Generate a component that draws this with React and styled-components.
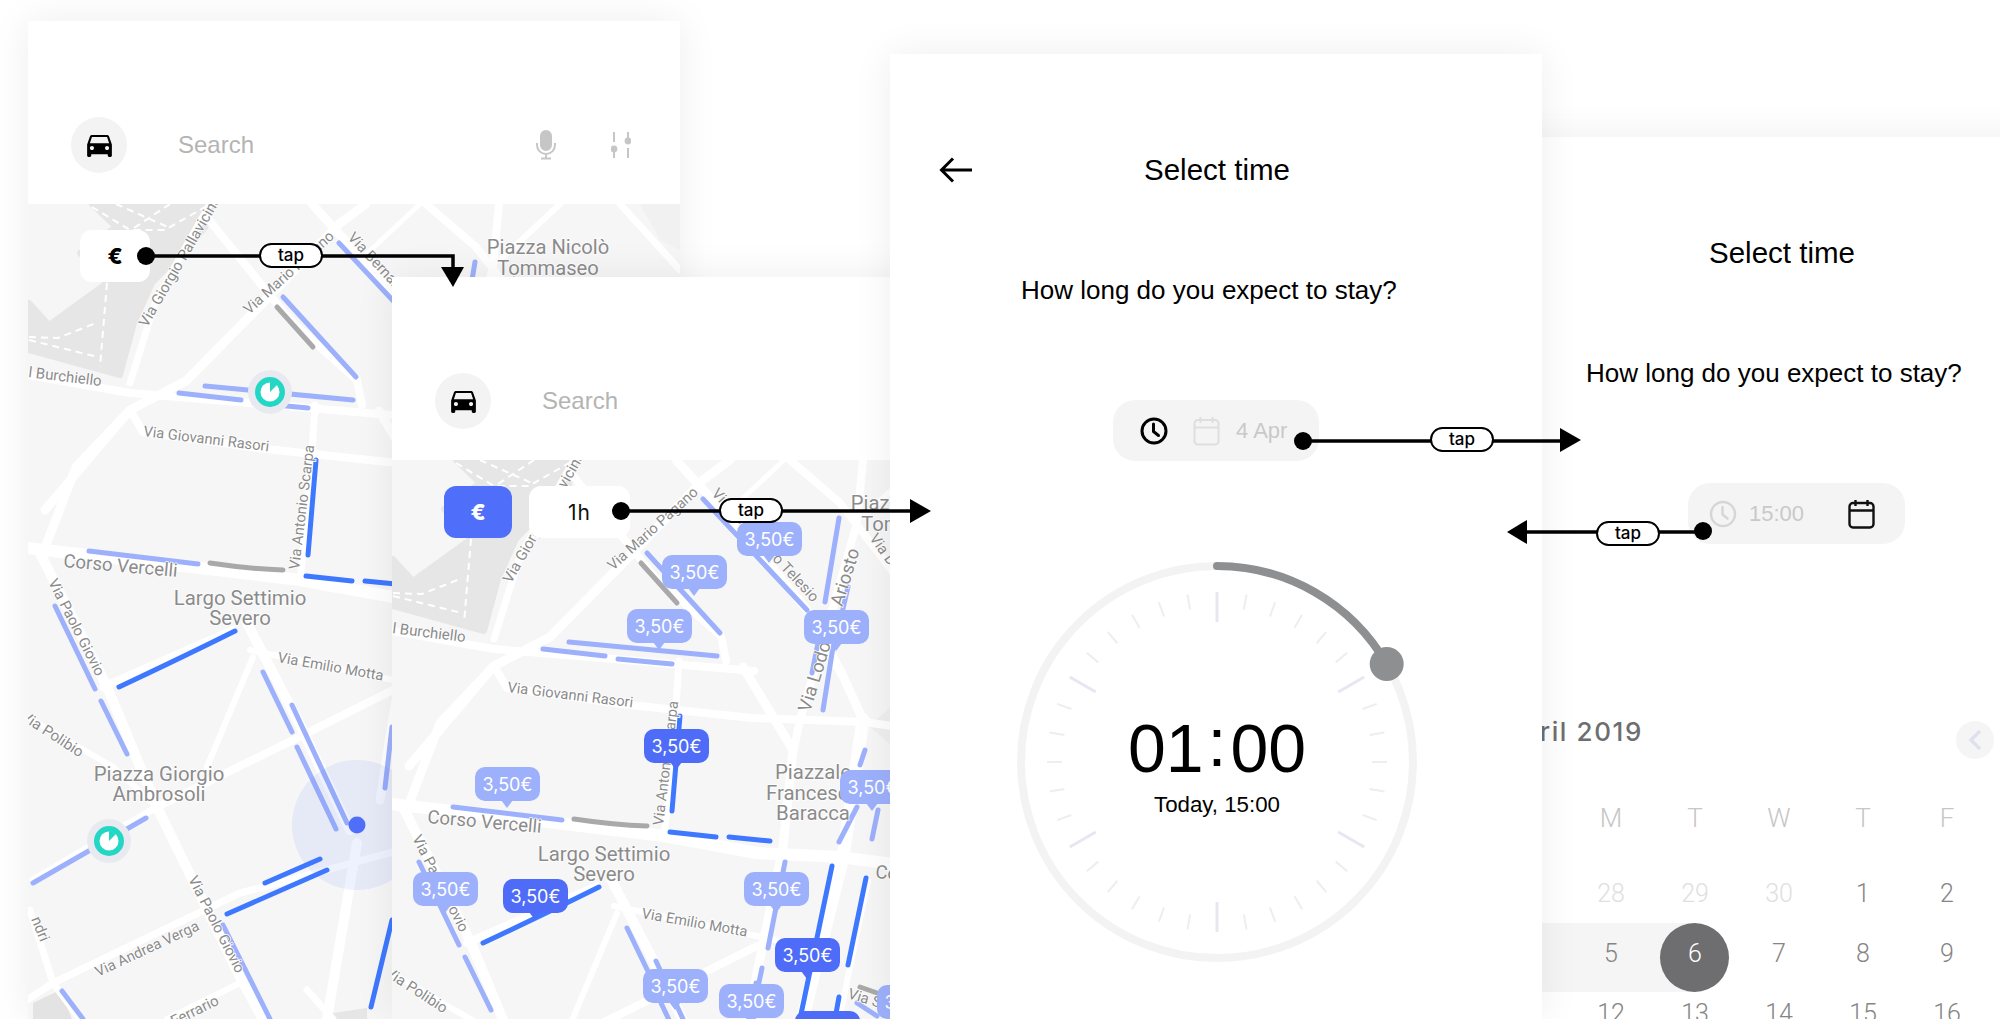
import React from "react";
import styled, { createGlobalStyle } from "styled-components";

const SANS = `"Liberation Sans", Arial, sans-serif`;

// all map drawing is in page coordinates of the first screen
const ROADS = [
  ["M27 548L200 568L300 580L393 597L476 601L680 628", 12],
  ["M40 553L107 687L157 807L240 977L263 1019", 10],
  ["M43 553L76 467L130 410L186 381L259 307L339 224L366 204", 9],
  ["M45 510L130 410", 9],
  ["M130 383L156 300L210 204", 7],
  ["M205 215L290 320L357 380L362 405", 8],
  ["M312 204L393 293L443 354L479 420L499 464", 9],
  ["M28 375L130 393L250 403L390 415", 8],
  ["M130 410L143 432L266 449L388 462L499 466L680 490", 8],
  ["M315 405L308 510L300 580", 7],
  ["M247 623L300 725L350 830", 10],
  ["M357 843L327 1019", 10],
  ["M103 687L233 630", 8],
  ["M207 767L253 657", 6],
  ["M157 807L293 740L393 690", 8],
  ["M27 717L113 767L157 807", 6],
  ["M33 880L157 807", 7],
  ["M27 1000L53 983L240 893L327 870L400 850", 7],
  ["M167 1019L240 983", 6],
  ["M30 910L53 983L80 1019", 7],
  ["M307 990L333 1019", 7],
  ["M250 650L393 680L440 690", 6],
  ["M379 411L429 494L419 591L393 717L380 800", 9],
  ["M499 464L479 601L439 761L425 840", 13],
  ["M426 204L476 247L540 330", 8],
  ["M499 204L493 267L469 351L436 464L429 497", 8],
  ["M560 204L500 260", 6],
  ["M420 204L360 260", 5],
  ["M620 204L680 270", 7],
  ["M504 625L480 740L460 840", 6],
];

const LIGHT = [
  [339, 243, 443, 354], [283, 297, 356, 377], [179, 393, 241, 400], [205, 386, 353, 400],
  [254, 403, 308, 408], [475, 262, 461, 346], [484, 331, 478, 357], [459, 454, 469, 391],
  [448, 417, 454, 387], [89, 551, 198, 564], [55, 606, 95, 689], [101, 701, 127, 754],
  [263, 672, 292, 732], [292, 705, 347, 823], [297, 747, 336, 829], [33, 883, 146, 818],
  [223, 925, 270, 1019], [62, 991, 83, 1019], [392, 727, 385, 788], [421, 606, 404, 692],
  [398, 712, 394, 731], [501, 494, 496, 509], [514, 554, 508, 583], [493, 551, 475, 586],
  [493, 747, 513, 760],
];

const DARK = [
  [316, 460, 308, 555], [306, 576, 352, 581], [365, 581, 406, 585], [265, 883, 320, 859],
  [227, 914, 327, 870], [392, 920, 371, 1007], [468, 610, 436, 763], [502, 622, 484, 709],
  [475, 741, 471, 763],
];

const GREY = [[277, 307, 313, 347], [496, 731, 513, 737]];

const LABELS = [
  { t: "Piazza Nicolò", x: 548, y: 254, s: 20.2, m: 1 },
  { t: "Tommaseo", x: 548, y: 275, s: 20.2, m: 1 },
  { t: "Via Giorgio Pallavicino", x: 147, y: 328, a: -60, s: 15 },
  { t: "Via Mario Pagano", x: 249, y: 315, a: -42, s: 14.7 },
  { t: "Via Bernardino Telesio", x: 347, y: 238, a: 47, s: 15 },
  { t: "Via Lodovico Ariosto", x: 446, y: 457, a: -73, s: 18.5 },
  { t: "Via Antonio Scarpa", x: 299, y: 570, a: -83, s: 14.8 },
  { t: "l Burchiello", x: 101, y: 386, a: 7, s: 15, e: 1 },
  { t: "Via Giovanni Rasori", x: 143, y: 436, a: 7, s: 14.7 },
  { t: "Corso Vercelli", x: 63, y: 567, a: 5, s: 18.6 },
  { t: "Via Paolo Giovio", x: 48, y: 582, a: 63, s: 14.7 },
  { t: "Largo Settimio", x: 240, y: 605, s: 20.4, m: 1 },
  { t: "Severo", x: 240, y: 625, s: 20.4, m: 1 },
  { t: "Via Emilio Motta", x: 277, y: 662, a: 10, s: 14.7 },
  { t: "Via Polibio", x: 20, y: 719, a: 33, s: 15 },
  { t: "Piazza Giorgio", x: 159, y: 781, s: 20.4, m: 1 },
  { t: "Ambrosoli", x: 159, y: 801, s: 20.4, m: 1 },
  { t: "Via Andrea Verga", x: 98, y: 977, a: -25, s: 14.7 },
  { t: "Via Paolo Giovio", x: 188, y: 879, a: 63, s: 14.7 },
  { t: "Via Ferrario", x: 220, y: 1004, a: -26, s: 15, e: 1 },
  { t: "ndri", x: 31, y: 919, a: 68, s: 15 },
  { t: "Piazzale", x: 449, y: 523, s: 20.4, m: 1 },
  { t: "Francesco", x: 449, y: 544, s: 20.4, m: 1 },
  { t: "Baracca", x: 449, y: 564, s: 20.4, m: 1 },
  { t: "Corso", x: 511, y: 622, a: 5, s: 18.6 },
  { t: "Via Solari", x: 483, y: 742, a: 17, s: 15 },
  { t: "Via Dante", x: 505, y: 282, a: 55, s: 15 },
];

const PARK_DASHES = [
  "M92 207L130 230L165 230L205 207",
  "M116 204L170 228M170 204L134 228",
  "M107 283L100 367",
  "M29 337L58 338L96 323",
  "M29 340L98 357",
];

const BADGES = [
  [769, 539], [694, 572], [659, 626], [836, 627], [676, 746, 1], [507, 784], [872, 787],
  [445, 889], [535, 896, 1], [776, 889], [807, 955, 1], [675, 986], [751, 1001], [827, 1028, 1],
  [909, 1002],
];

const Line = ({ d, color, width = 5 }) => (
  <path d={d} fill="none" stroke={color} strokeWidth={width} strokeLinecap="round" strokeLinejoin="round" />
);

const Segments = ({ list, color }) =>
  list.map(([x1, y1, x2, y2]) => (
    <Line key={`${x1}-${y1}`} d={`M${x1} ${y1}L${x2} ${y2}`} color={color} />
  ));

const TealMarker = ({ x, y }) => (
  <g>
    <circle cx={x} cy={y} r="22" fill="#e9eaf0" />
    <circle cx={x} cy={y} r="15" fill="#24d7c4" />
    <circle cx={x} cy={y} r="9.5" fill="#fff" />
    <path d={`M${x} ${y}V${y - 10}A10 10 0 0 1 ${x + 7} ${y - 7}Z`} fill="#24d7c4" />
  </g>
);

const MapDrawing = ({ location }) => (
  <MapSvg viewBox="28 204 652 815">
    <rect x="28" y="204" width="652" height="815" fill="#f6f6f7" />
    <path
      d="M92 204L212 204L205 228L152 283L134 323L120 375L29 350L29 303L49 325L107 283L80 253L116 227Z"
      fill="#e6e6e7"
      stroke="#e6e6e7"
      strokeWidth="6"
      strokeLinejoin="round"
    />
    <path d="M33 1003L60 990L72 1019L33 1019Z" fill="#e3e3e4" />
    <path d="M333 1013L367 1008L367 1019L333 1019Z" fill="#e6e6e7" />
    <path d="M640 204L680 204L680 250L660 240Z" fill="#f1f1f2" />
    <path d="M505 470L540 440L540 500Z" fill="#efeff0" />
    {PARK_DASHES.map((d) => (
      <path key={d} d={d} fill="none" stroke="#fff" strokeWidth="2" strokeDasharray="7 5" />
    ))}
    {ROADS.map(([d, w]) => (
      <Line key={d} d={d} color="#fff" width={w} />
    ))}
    <Segments list={LIGHT} color="#9db0fb" />
    <Segments list={DARK} color="#3e78ff" />
    <Segments list={GREY} color="#a9a9a9" />
    <Line d="M119 687Q187 655 235 631" color="#3e78ff" />
    <Line d="M210 563Q250 569 283 570" color="#a9a9a9" />
    {LABELS.map((l) => (
      <MapLabel
        key={l.t + l.x}
        x={l.x}
        y={l.y}
        fontSize={l.s}
        textAnchor={l.m ? "middle" : l.e ? "end" : "start"}
        transform={l.a ? `rotate(${l.a} ${l.x} ${l.y})` : undefined}
      >
        {l.t}
      </MapLabel>
    ))}
    {location && (
      <g>
        <circle cx="357" cy="825" r="65" fill="#5a76f7" opacity="0.1" />
        <circle cx="357" cy="825" r="8.5" fill="#4f6ffa" />
        <TealMarker x={270} y={392} />
        <TealMarker x={109} y={841} />
      </g>
    )}
  </MapSvg>
);

const CarIcon = () => (
  <svg width="33" height="33" viewBox="0 0 24 24" fill="#000">
    <path d="M18.92 6.01C18.72 5.42 18.16 5 17.5 5h-11c-.66 0-1.21.42-1.42 1.01L3 12v8c0 .55.45 1 1 1h1c.55 0 1-.45 1-1v-1h12v1c0 .55.45 1 1 1h1c.55 0 1-.45 1-1v-8l-2.08-5.99zM6.5 16c-.83 0-1.5-.67-1.5-1.5S5.67 13 6.5 13s1.5.67 1.5 1.5S7.33 16 6.5 16zm11 0c-.83 0-1.5-.67-1.5-1.5s.67-1.5 1.5-1.5 1.5.67 1.5 1.5-.67 1.5-1.5 1.5zM5 11l1.5-4.5h11L19 11H5z" />
  </svg>
);

const MicIcon = () => (
  <svg width="22" height="30" viewBox="0 0 22 30" fill="none" stroke="#c6c6c6" strokeWidth="2">
    <rect x="6" y="1" width="10" height="19" rx="5" fill="#c6c6c6" />
    <path d="M2 13v2a9 9 0 0 0 18 0v-2M11 24v4M6 28.5h10" />
  </svg>
);

const SlidersIcon = () => (
  <svg width="20" height="28" viewBox="0 0 20 28" fill="#c6c6c6" stroke="#c6c6c6" strokeWidth="2">
    <path d="M3 1v10M3 21v6M17 1v6M17 17v10" />
    <circle cx="3" cy="18" r="2.4" />
    <circle cx="17" cy="10" r="2.4" />
  </svg>
);

const BackArrow = () => (
  <svg width="34" height="26" viewBox="0 0 34 26" fill="none" stroke="#000" strokeWidth="3">
    <path d="M33 13H3M14 1.5L2.5 13L14 24.5" />
  </svg>
);

const ClockIcon = ({ color, width }) => (
  <svg width="28" height="28" viewBox="0 0 28 28" fill="none" stroke={color} strokeWidth={width}>
    <circle cx="14" cy="14" r="12" />
    <path d="M13.5 7v7.5l5 4" strokeLinecap="round" />
  </svg>
);

const CalendarIcon = ({ color, width }) => (
  <svg width="27" height="30" viewBox="0 0 27 30" fill="none" stroke={color} strokeWidth={width}>
    <rect x="1.5" y="4" width="24" height="24.5" rx="3.5" />
    <path d="M1.5 11.5h24M7.5 1v6M19.5 1v6" />
  </svg>
);

const TICK_ANGLES = Array.from({ length: 36 }, (_, i) => i * 10);

const DialDrawing = () => (
  <DialSvg viewBox="-200 -200 400 400">
    <circle r="196" fill="none" stroke="#f3f3f4" strokeWidth="8" />
    {TICK_ANGLES.map((a) => {
      const major = a % 60 === 0;
      return (
        <line
          key={a}
          y1={major ? -140 : -155}
          y2="-170"
          stroke={major ? "#e6e7f1" : "#ededf2"}
          strokeWidth={major ? 3 : 2}
          transform={`rotate(${a})`}
        />
      );
    })}
    <path d="M0 -196A196 196 0 0 1 169.7 -98" fill="none" stroke="#8e8f91" strokeWidth="8" strokeLinecap="round" />
    <circle cx="169.7" cy="-98" r="17" fill="#8e8f91" />
  </DialSvg>
);

const SearchHeader = () => (
  <Header>
    <CarBadge>
      <CarIcon />
    </CarBadge>
    <SearchText>Search</SearchText>
    <HeaderTools>
      <MicIcon />
      <SlidersIcon />
    </HeaderTools>
  </Header>
);

const TimeIntro = () => (
  <>
    <TitleRow>
      <BackArrow />
      <Title>Select time</Title>
    </TitleRow>
    <Question>How long do you expect to stay?</Question>
  </>
);

const WEEK = ["M", "T", "W", "T", "F", "S", "S"];
const DAYS = [
  [28, "muted"], [29, "muted"], [30, "muted"], [1], [2], [3], [4],
  [5, "range"], [6, "picked"], [7], [8], [9], [10], [11],
  [12], [13], [14], [15], [16], [17], [18],
];

const Calendar = () => (
  <>
    <MonthRow>
      <Month>April 2019</Month>
      <MonthNav>
        <svg width="14" height="22" viewBox="0 0 14 22" fill="none" stroke="#dfe1ee" strokeWidth="3.5">
          <path d="M12 2L3 11l9 9" />
        </svg>
      </MonthNav>
    </MonthRow>
    <WeekGrid>
      {WEEK.map((d, i) => (
        <WeekDay key={i}>{d}</WeekDay>
      ))}
    </WeekGrid>
    <DayGrid>
      {DAYS.map(([n, kind]) => (
        <Day key={n} $kind={kind}>
          <span>{n}</span>
        </Day>
      ))}
    </DayGrid>
  </>
);

const Connectors = () => (
  <ConnectorSvg viewBox="0 0 2000 1019">
    <g fill="none" stroke="#000" strokeWidth="3.5">
      <path d="M146 256H453V272" />
      <path d="M621 511H915" />
      <path d="M1303 441H1565" />
      <path d="M1703 532H1522" />
    </g>
    <circle cx="146" cy="256" r="9" />
    <circle cx="621" cy="511" r="9" />
    <circle cx="1303" cy="441" r="9" />
    <circle cx="1703" cy="531" r="9" />
    <path d="M441 267H464L453 287Z" />
    <path d="M910 499V523L931 511Z" />
    <path d="M1560 428V452L1581 440Z" />
    <path d="M1527 520V544L1507 532Z" />
  </ConnectorSvg>
);

const App = () => (
  <Canvas>
    <GlobalStyle />

    <Screen $left={28} $top={21} $z={1}>
      <SearchHeader />
      <MapArea>
        <MapDrawing location />
        <ChipRow>
          <Chip $w={70}>
            <EuroSign>€</EuroSign>
          </Chip>
        </ChipRow>
      </MapArea>
    </Screen>

    <Screen $left={392} $top={277} $z={2}>
      <SearchHeader />
      <MapArea>
        <MapDrawing />
        <ChipRow>
          <Chip $w={68} $active>
            <EuroSign>€</EuroSign>
          </Chip>
          <Chip $w={101}>
            <Duration>1h</Duration>
          </Chip>
        </ChipRow>
        {BADGES.map(([x, y, dark]) => (
          <PriceBadge key={`${x}-${y}`} $x={x - 392} $y={y - 460} $dark={dark}>
            3,50€
          </PriceBadge>
        ))}
      </MapArea>
    </Screen>

    <Screen $left={1455} $top={137} $z={3}>
      <TimeIntro />
      <Segment $w={217} $ml={233} $pad={21}>
        <ClockIcon color="#d6d6d6" width={2.4} />
        <SegLabel $ml={12}>15:00</SegLabel>
        <SegIcon $ml={44}>
          <CalendarIcon color="#111" width={2.4} />
        </SegIcon>
      </Segment>
      <Calendar />
    </Screen>

    <Screen $left={890} $top={54} $z={4}>
      <TimeIntro />
      <Segment $w={206} $ml={223} $pad={27}>
        <ClockIcon color="#000" width={3} />
        <SegIcon $ml={25}>
          <CalendarIcon color="#dedede" width={2} />
        </SegIcon>
        <SegLabel $ml={16}>4 Apr</SegLabel>
      </Segment>
      <Dial>
        <DialDrawing />
        <Readout>
          <TimeValue>
            01<Colon>:</Colon>00
          </TimeValue>
          <TimeNote>Today, 15:00</TimeNote>
        </Readout>
      </Dial>
    </Screen>

    <Connectors />
    <TapPill $x={259} $y={243}>tap</TapPill>
    <TapPill $x={719} $y={498}>tap</TapPill>
    <TapPill $x={1430} $y={427}>tap</TapPill>
    <TapPill $x={1596} $y={521}>tap</TapPill>
  </Canvas>
);

const GlobalStyle = createGlobalStyle`
  html, body {
    margin: 0;
    background: #fff;
    overflow: hidden;
  }
`;

const Canvas = styled.div`
  position: relative;
  width: 2000px;
  height: 1019px;
  overflow: hidden;
  background: #fff;
  font-family: ${SANS};
`;

// the mock-up screens sit freely on the design canvas
const Screen = styled.section`
  position: absolute;
  left: ${(p) => p.$left}px;
  top: ${(p) => p.$top}px;
  z-index: ${(p) => p.$z};
  width: 652px;
  height: ${(p) => 1019 - p.$top}px;
  background: #fff;
  box-shadow: 0 0 38px rgba(0, 0, 0, 0.07);
  overflow: hidden;
`;

const Header = styled.header`
  display: flex;
  align-items: center;
  height: 183px;
  padding: 64px 0 0 43px;
  box-sizing: border-box;
`;

const CarBadge = styled.div`
  display: flex;
  align-items: center;
  justify-content: center;
  width: 56px;
  height: 56px;
  border-radius: 50%;
  background: #f3f3f3;
`;

const SearchText = styled.div`
  margin-left: 51px;
  font-size: 24px;
  color: #b4b4b4;
`;

const HeaderTools = styled.div`
  display: flex;
  align-items: center;
  gap: 54px;
  margin-left: 281px;
`;

const MapArea = styled.div`
  position: relative;
  height: 815px;
  overflow: hidden;
`;

const MapSvg = styled.svg`
  display: block;
  width: 652px;
  height: 815px;
`;

const MapLabel = styled.text`
  font-family: Roboto, ${SANS};
  fill: #8b8b8b;
  stroke: #fff;
  stroke-width: 1.5px;
  paint-order: stroke;
`;

const ChipRow = styled.div`
  position: absolute;
  top: 26px;
  left: 52px;
  display: flex;
  gap: 17px;
`;

const Chip = styled.div`
  display: flex;
  align-items: center;
  justify-content: center;
  width: ${(p) => p.$w}px;
  height: 52px;
  border-radius: 12px;
  background: ${(p) => (p.$active ? "#4f6ffa" : "#fff")};
  color: ${(p) => (p.$active ? "#fff" : "#000")};
`;

const EuroSign = styled.span`
  font-family: Inter, ${SANS};
  font-size: 22px;
  font-weight: 800;
`;

const Duration = styled.span`
  font-family: Inter, ${SANS};
  font-size: 21px;
  letter-spacing: 1px;
  color: #111;
`;

const PriceBadge = styled.div`
  position: absolute;
  left: ${(p) => p.$x - 32}px;
  top: ${(p) => p.$y - 17}px;
  display: flex;
  align-items: center;
  justify-content: center;
  width: 65px;
  height: 34px;
  border-radius: 10px;
  background: ${(p) => (p.$dark ? "#4e6cf8" : "#9db0fb")};
  color: #fff;
  font-family: Inter, ${SANS};
  font-size: 18px;

  &::after {
    content: "";
    position: absolute;
    left: 26px;
    bottom: -7px;
    border-left: 6px solid transparent;
    border-right: 6px solid transparent;
    border-top: 8px solid ${(p) => (p.$dark ? "#4e6cf8" : "#9db0fb")};
  }
`;

const TitleRow = styled.div`
  display: flex;
  align-items: center;
  height: 40px;
  margin-top: 96px;
  padding-left: 49px;
`;

const Title = styled.h1`
  margin: 0 0 0 171px;
  font-size: 29.5px;
  font-weight: 400;
  color: #000;
`;

const Question = styled.p`
  margin: 82px 0 0 131px;
  font-size: 26px;
  line-height: 36px;
  color: #000;
`;

const Segment = styled.div`
  display: flex;
  align-items: center;
  box-sizing: border-box;
  width: ${(p) => p.$w}px;
  height: 61px;
  margin: 92px 0 0 ${(p) => p.$ml}px;
  padding-left: ${(p) => p.$pad}px;
  border-radius: 22px;
  background: #f4f4f4;
`;

const SegIcon = styled.div`
  display: flex;
  margin-left: ${(p) => p.$ml}px;
`;

const SegLabel = styled.span`
  margin-left: ${(p) => p.$ml}px;
  font-size: 22px;
  color: #c9c9c9;
`;

const Dial = styled.div`
  position: relative;
  width: 400px;
  height: 400px;
  margin: 101px 0 0 127px;
`;

const DialSvg = styled.svg`
  display: block;
  width: 400px;
  height: 400px;
  overflow: visible;
`;

const Readout = styled.div`
  position: absolute;
  inset: 8px 0 0;
  display: flex;
  flex-direction: column;
  align-items: center;
  justify-content: center;
`;

const TimeValue = styled.div`
  display: flex;
  font-size: 68px;
  line-height: 68px;
  color: #000;
`;

const Colon = styled.span`
  margin: 0 4px;
  transform: translateY(-6px);
`;

const TimeNote = styled.div`
  margin-top: 10px;
  font-size: 22.3px;
  line-height: 26px;
  color: #000;
`;

const MonthRow = styled.div`
  display: flex;
  justify-content: space-between;
  width: 539px;
  margin-top: 177px;
  padding-left: 47px;
  box-sizing: border-box;
`;

const Month = styled.div`
  font-family: Inter, ${SANS};
  font-size: 26px;
  font-weight: 500;
  line-height: 22px;
  letter-spacing: 1.6px;
  color: #6e6e70;
`;

const MonthNav = styled.div`
  display: flex;
  align-items: center;
  justify-content: center;
  width: 38px;
  height: 38px;
  border-radius: 50%;
  background: #f5f5f5;
`;

const WeekGrid = styled.div`
  display: grid;
  grid-template-columns: repeat(7, 84px);
  margin: 44px 0 0 114px;
`;

const WeekDay = styled.div`
  text-align: center;
  font-family: Roboto, ${SANS};
  font-size: 26px;
  font-weight: 300;
  line-height: 30px;
  color: #c6c6c6;
`;

const dayColor = { muted: "#e0e0e0", picked: "#fff" };

const Day = styled.div`
  position: relative;
  height: 60px;
  display: flex;
  align-items: center;
  justify-content: center;
  font-family: Roboto, ${SANS};
  font-size: 25px;
  font-weight: 300;
  color: ${(p) => dayColor[p.$kind] || "#858585"};

  span {
    position: relative;
    z-index: 1;
  }

  ${(p) =>
    p.$kind === "range" &&
    `&::before {
      content: "";
      position: absolute;
      top: 0;
      left: -100px;
      right: 0;
      height: 69px;
      background: #f5f5f5;
    }`}

  ${(p) =>
    p.$kind === "picked" &&
    `&::before {
      content: "";
      position: absolute;
      top: 0;
      left: 0;
      width: 50%;
      height: 69px;
      background: #f5f5f5;
    }
    &::after {
      content: "";
      position: absolute;
      top: 0;
      left: 7px;
      width: 69px;
      height: 69px;
      border-radius: 50%;
      background: #6e6e70;
    }`}
`;

const DayGrid = styled.div`
  display: grid;
  grid-template-columns: repeat(7, 84px);
  margin: 30px 0 0 114px;
`;

const ConnectorSvg = styled.svg`
  position: absolute;
  inset: 0;
  z-index: 5;
  width: 2000px;
  height: 1019px;
  pointer-events: none;
`;

const TapPill = styled.div`
  position: absolute;
  left: ${(p) => p.$x}px;
  top: ${(p) => p.$y}px;
  z-index: 6;
  display: flex;
  align-items: center;
  justify-content: center;
  box-sizing: border-box;
  width: 64px;
  height: 25px;
  padding-bottom: 2px;
  border: 2px solid #000;
  border-radius: 13px;
  background: #fff;
  font-family: Inter, ${SANS};
  font-size: 17px;
  font-weight: 500;
  color: #000;
`;

export default App;
